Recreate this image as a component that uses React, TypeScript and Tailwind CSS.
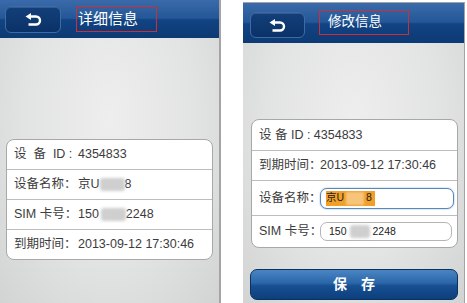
import React from "react"

const FONT = "font-['Liberation_Sans','Noto_Sans_CJK_SC',sans-serif]"

function BackIcon() {
  return (
    <svg width="17" height="13" viewBox="0 0 17 13">
      <path d="M0.5 3.5 L6 0 V7 Z" fill="white" />
      <path d="M5 3.5 H11 A4 4 0 0 1 11 11.5 H3.5" stroke="white" strokeWidth="2.4" fill="none" />
    </svg>
  )
}

function BackButton({ className }: { className: string }) {
  return (
    <div
      className={
        "flex items-center justify-center rounded-[6px] border border-[#3e6ba6] bg-[linear-gradient(to_bottom,#123f7a,#0b3267)] shadow-[inset_0_1px_0_rgba(255,255,255,0.15)] " +
        className
      }
    >
      <BackIcon />
    </div>
  )
}

function Blur({ w = 25 }: { w?: number }) {
  return <span className="inline-block h-[13px] rounded-[3px] bg-[#cfcfcf] blur-[1.5px] align-middle" style={{ width: w }} />
}

const headerBg =
  "bg-[linear-gradient(to_bottom,#3a6aaa_0%,#245797_48%,#124383_52%,#0c3a74_100%)]"
const bodyBg =
  "bg-[radial-gradient(ellipse_at_50%_30%,#eeeeee_0%,#e2e3e3_55%,#d2d4d4_100%)]"

function DetailPhone() {
  return (
    <div className="flex h-full w-[221px] flex-col border-r-2 border-[#a4a4a4]">
      <div className={"flex h-[38px] items-center pl-[5px] " + headerBg}>
        <BackButton className="h-[27px] w-[56px]" />
        <div className="ml-[15px] flex h-[26px] w-[81px] items-center border border-[#c8303a] pl-[1px] text-[15px] text-white">
          详细信息
        </div>
      </div>
      <div className={"flex-1 px-[6px] pt-[101px] " + bodyBg}>
        <div className="rounded-[8px] border border-[#a8a8a8] bg-white text-[12.5px] text-[#3c3c3c]">
          <div className="flex h-[30px] items-center border-b border-[#bdbdbd] pl-[7px]">
            <span className="w-[64px] shrink-0 whitespace-nowrap">设&nbsp;&nbsp;备&nbsp;&nbsp;ID&nbsp;:</span>
            <span>4354833</span>
          </div>
          <div className="flex h-[30px] items-center border-b border-[#bdbdbd] pl-[7px]">
            <span className="w-[64px] shrink-0 whitespace-nowrap">设备名称：</span>
            <span>京U</span>
            <Blur />
            <span>8</span>
          </div>
          <div className="flex h-[30px] items-center border-b border-[#bdbdbd] pl-[7px]">
            <span className="w-[64px] shrink-0 whitespace-nowrap">SIM 卡号：</span>
            <span>150</span>
            <span className="ml-[2px]">
              <Blur />
            </span>
            <span>2248</span>
          </div>
          <div className="flex h-[29px] items-center pl-[7px]">
            <span className="w-[64px] shrink-0 whitespace-nowrap">到期时间：</span>
            <span>2013-09-12 17:30:46</span>
          </div>
        </div>
      </div>
    </div>
  )
}

function EditPhone() {
  return (
    <div className="ml-[22px] mt-[2px] flex h-[301px] w-[222px] flex-col border-t border-r border-[#a4a4a4]">
      <div className={"flex h-[40px] items-start pl-[7px] " + headerBg}>
        <BackButton className="mt-[9px] h-[26px] w-[55px]" />
        <div className="ml-[14px] mt-[7px] flex h-[25px] w-[90px] items-center border border-[#c8303a] pl-[8px] text-[13.5px] text-white">
          修改信息
        </div>
      </div>
      <div className={"flex-1 px-[7px] pt-[76px] " + bodyBg}>
        <div className="ml-[1px] w-[207px] rounded-[8px] border border-[#a8a8a8] bg-white text-[12.5px] text-[#3c3c3c]">
          <div className="flex h-[31px] items-center border-b border-[#bdbdbd] pl-[7px]">
            <span className="whitespace-nowrap">设&nbsp;备&nbsp;ID&nbsp;:&nbsp;4354833</span>
          </div>
          <div className="flex h-[30px] items-center border-b border-[#bdbdbd] pl-[7px]">
            <span className="w-[61px] shrink-0 whitespace-nowrap">到期时间：</span>
            <span className="whitespace-nowrap">2013-09-12 17:30:46</span>
          </div>
          <div className="flex h-[35px] items-center border-b border-[#bdbdbd] pl-[7px]">
            <span className="w-[61px] shrink-0 whitespace-nowrap">设备名称：</span>
            <div className="flex h-[21px] w-[134px] shrink-0 items-center rounded-[7px] border-[1.5px] border-[#5a86b8] bg-white pl-[5px] text-[10.5px] text-[#222] shadow-[0_0_2px_#8fb3da]">
              <span className="flex h-[15px] items-center bg-[#f0a028] pr-[3px]">
                <span>京U</span>
                <span className="mx-[2px] inline-block h-[13px] w-[18px] bg-[#f6c47a] blur-[1px]" />
                <span>8</span>
              </span>
            </div>
          </div>
          <div className="flex h-[31px] items-center pl-[7px]">
            <span className="w-[61px] shrink-0 whitespace-nowrap">SIM 卡号：</span>
            <div className="flex h-[19px] w-[132px] shrink-0 items-center rounded-[7px] border border-[#b4b4b4] bg-white pl-[8px] text-[10.5px] text-[#222]">
              <span>150</span>
              <span className="mx-[3px]">
                <Blur w={20} />
              </span>
              <span>2248</span>
            </div>
          </div>
        </div>
        <button
          type="button"
          className="mt-[21px] flex h-[31px] w-[208px] items-center justify-center rounded-[7px] border border-[#0b325f] bg-[linear-gradient(to_bottom,#4a86c4_0%,#2a66a8_45%,#174f92_55%,#0d3f7c_100%)] text-[14px] font-bold tracking-[14px] text-white"
        >
          <span className="pl-[14px]">保存</span>
        </button>
      </div>
    </div>
  )
}

export default function App() {
  return (
    <div className={"flex h-[303px] w-[467px] bg-white " + FONT}>
      <DetailPhone />
      <EditPhone />
    </div>
  )
}
